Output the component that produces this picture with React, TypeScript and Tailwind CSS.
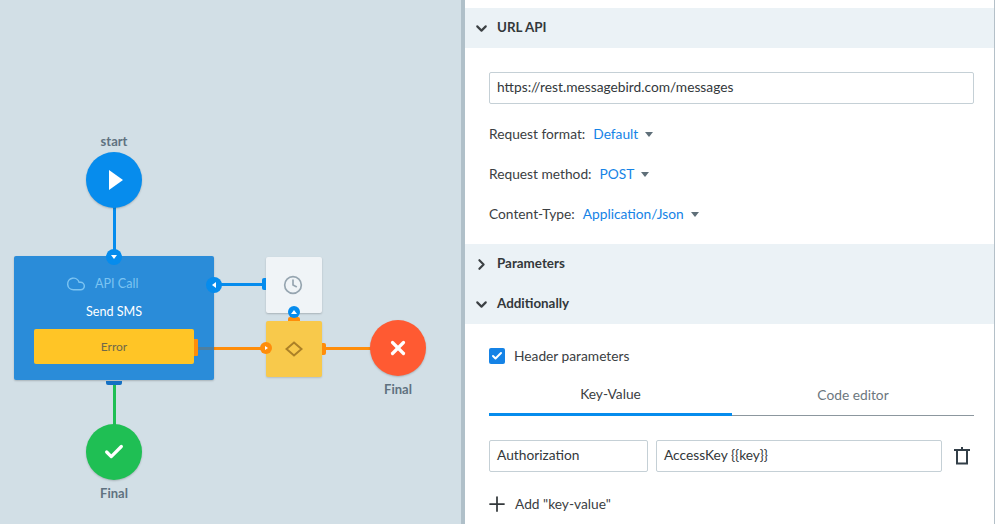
import { Check, ChevronDown, ChevronRight, Clock, Cloud, Plus, X } from 'lucide-react'

const FONT = "font-['Lato',sans-serif]"

function SectionHeader({ title, open }: { title: string; open: boolean }) {
  return (
    <div className="flex h-10 items-center bg-[#ebf2f6] pl-[8px]">
      {open ? (
        <ChevronDown size={17} strokeWidth={3} className="text-[#3c4144]" />
      ) : (
        <ChevronRight size={17} strokeWidth={3} className="text-[#3c4144]" />
      )}
      <span className="ml-[7px] pb-[2px] text-[13.4px] font-bold text-[#33383b]">{title}</span>
    </div>
  )
}

function SelectRow({ label, value }: { label: string; value: string }) {
  return (
    <div className="flex h-10 items-center text-[13.75px]">
      <span className="text-[#3b4043]">{label}</span>
      <span className="ml-2 text-[#1583e6]">{value}</span>
      <span className="ml-[7px] h-0 w-0 border-x-4 border-t-[5px] border-x-transparent border-t-[#5f6f79]" />
    </div>
  )
}

function Port({ className, children }: { className: string; children: React.ReactNode }) {
  return (
    <div className={`absolute flex items-center justify-center rounded-full ${className}`}>{children}</div>
  )
}

function TrashIcon() {
  return (
    <svg width="16" height="18" viewBox="0 0 16 18" fill="none" stroke="#333f48" strokeWidth="2" className="ml-3">
      <path d="M0 3H16M8 0V3M3 3V16.5H13V3" />
    </svg>
  )
}

function Canvas() {
  return (
    <div className="relative h-full w-[461px] shrink-0 bg-[#d2dfe6]">
      {/* connectors */}
      <div className="absolute left-[113px] top-[205px] h-[50px] w-[3px] bg-[#068ced]" />
      <div className="absolute left-[220px] top-[283px] h-[3px] w-[45px] bg-[#068ced]" />
      <div className="absolute left-[214px] top-[347px] h-[3px] w-[50px] bg-[#ff8d0a]" />
      <div className="absolute left-[325px] top-[347px] h-[3px] w-[50px] bg-[#ff8d0a]" />
      <div className="absolute left-[113px] top-[381px] h-[45px] w-[3px] bg-[#1fbf54]" />

      <div className="absolute left-[86px] top-[132px] w-14 text-center text-[13px] font-bold text-[#5f7280]">start</div>
      <div className="absolute left-[86px] top-[152px] flex size-14 items-center justify-center rounded-full bg-[#068ced] shadow-[0_1px_2px_rgba(0,0,0,0.2)]">
        <svg width="14" height="20" viewBox="0 0 14 20" className="ml-[4px]">
          <path d="M0 0 L14 10 L0 20 Z" fill="#fff" />
        </svg>
      </div>

      {/* api call node */}
      <div className="absolute left-[14px] top-[256px] h-[124px] w-[200px] rounded-[2px] bg-[#2a8cd9] shadow-[0_1px_2px_rgba(0,0,0,0.2)]">
        <div className="mt-[18px] flex h-5 items-center pl-[52px] text-[12.6px] text-[#7cc4f2]">
          <Cloud size={20} strokeWidth={1.75} className="mr-[9px]" />
          <span>API Call</span>
        </div>
        <div className="mt-2 text-center text-[12.6px] leading-5 text-white">Send SMS</div>
        <div className="absolute left-5 top-[73px] flex h-[35px] w-40 items-center justify-center rounded-[2px] bg-[#ffc526] text-xs text-[#70694a]">
          Error
        </div>
        <div className="absolute left-[180px] top-[83px] h-[17px] w-1 rounded-r-[1px] bg-[#ff8d0a]" />
        <div className="absolute left-[184px] top-[91px] h-[3px] w-4 bg-[#4f7f9f]" />
      </div>
      <div className="absolute left-[106px] top-[381px] h-1 w-4 rounded-b-[2px] bg-[#1370c4]" />
      <Port className="left-[106px] top-[249px] size-4 bg-[#068ced]">
        <span className="h-0 w-0 border-x-[3px] border-t-4 border-x-transparent border-t-white" />
      </Port>
      <Port className="left-[206px] top-[277px] size-4 bg-[#068ced]">
        <span className="h-0 w-0 border-y-[3px] border-r-4 border-y-transparent border-r-white" />
      </Port>

      {/* timer node */}
      <div className="absolute left-[266px] top-[257px] flex size-14 items-center justify-center rounded-[2px] bg-[#f0f4f7] shadow-[0_1px_2px_rgba(0,0,0,0.2)]">
        <Clock size={20} strokeWidth={2} className="mr-[2px] text-[#96a5b0]" />
      </div>
      <div className="absolute left-[262px] top-[278px] h-3 w-1 rounded-l-[2px] bg-[#068ced]" />

      {/* condition node */}
      <div className="absolute left-[266px] top-[321px] flex size-14 items-center justify-center rounded-[2px] bg-[#f8c94b] shadow-[0_1px_2px_rgba(0,0,0,0.15)]">
        <svg width="18" height="16" viewBox="0 0 18 16">
          <path d="M9 1.5 L16.5 8 L9 14.5 L1.5 8 Z" fill="none" stroke="#ac8127" strokeWidth="2" />
        </svg>
      </div>
      <div className="absolute left-[288px] top-[317px] h-1 w-3 rounded-t-[2px] bg-[#ff8d0a]" />
      <div className="absolute left-[322px] top-[343px] h-3 w-1 rounded-r-[2px] bg-[#ff8d0a]" />
      <Port className="left-[288px] top-[306px] size-3 bg-[#068ced]">
        <span className="h-0 w-0 border-x-[3px] border-b-4 border-x-transparent border-b-white" />
      </Port>
      <Port className="left-[260px] top-[342px] size-3 bg-[#ff8d0a]">
        <span className="h-0 w-0 border-y-2 border-l-[3px] border-y-transparent border-l-white" />
      </Port>

      <div className="absolute left-[370px] top-[320px] flex size-14 items-center justify-center rounded-full bg-[#ff5a32] shadow-[0_1px_2px_rgba(0,0,0,0.2)]">
        <X size={22} strokeWidth={3.5} className="text-white" />
      </div>
      <div className="absolute left-[370px] top-[380px] w-14 text-center text-[13px] font-bold text-[#5f7280]">Final</div>

      <div className="absolute left-[86px] top-[424px] flex size-14 items-center justify-center rounded-full bg-[#1fbf54] shadow-[0_1px_2px_rgba(0,0,0,0.2)]">
        <Check size={22} strokeWidth={3.5} className="text-white" />
      </div>
      <div className="absolute left-[86px] top-[484px] w-14 text-center text-[13px] font-bold text-[#5f7280]">Final</div>
    </div>
  )
}

export default function App() {
  return (
    <div className={`flex h-[524px] w-[995px] overflow-hidden bg-white ${FONT}`}>
      <Canvas />
      <div className="w-1 shrink-0 bg-[#b0c0c9]" />
      <div className="min-w-0 flex-1 border-r border-[#b4c0c8] pt-2">
        <SectionHeader title="URL API" open />
        <div className="pl-6 pr-5 pt-6 pb-[10px]">
          <div className="flex h-8 items-center rounded-[2px] border border-[#c5d0d6] pb-[2px] pl-[7px] text-[13.75px] text-[#33383b]">
            https://rest.messagebird.com/messages
          </div>
          <div className="mt-[10px]">
            <SelectRow label="Request format:" value="Default" />
            <SelectRow label="Request method:" value="POST" />
            <SelectRow label="Content-Type:" value="Application/Json" />
          </div>
        </div>
        <SectionHeader title="Parameters" open={false} />
        <SectionHeader title="Additionally" open />
        <div className="pl-6 pr-5 pt-6">
          <div className="flex h-4 items-center text-[13.75px] text-[#3b4043]">
            <span className="flex size-4 items-center justify-center rounded-[2px] bg-[#1583e6]">
              <Check size={12} strokeWidth={4} className="text-white" />
            </span>
            <span className="ml-[9px]">Header parameters</span>
          </div>
          <div className="mt-[14px] flex h-[38px] text-[13.75px]">
            <div className="flex w-[243px] items-center justify-center border-b-[3px] border-[#068ced] pb-[2px] text-[#3b4043]">
              Key-Value
            </div>
            <div className="flex flex-1 items-center justify-center border-b border-[#8c979e] pb-[2px] text-[#6c777e]">
              Code editor
            </div>
          </div>
          <div className="mt-6 flex items-center">
            <div className="flex h-8 w-[159px] items-center rounded-[2px] border border-[#c5d0d6] pb-[2px] pl-[7px] text-[13.75px] text-[#33383b]">
              Authorization
            </div>
            <div className="ml-2 flex h-8 w-[286px] items-center rounded-[2px] border border-[#c5d0d6] pb-[2px] pl-[7px] text-[13.75px] text-[#33383b]">
              AccessKey {'{{key}}'}
            </div>
            <TrashIcon />
          </div>
          <div className="mt-5 flex items-center text-[13.75px] text-[#3b4043]">
            <Plus size={24} strokeWidth={1.75} className="-ml-1 text-[#33383b]" />
            <span className="ml-[6px]">Add "key-value"</span>
          </div>
        </div>
      </div>
    </div>
  )
}
